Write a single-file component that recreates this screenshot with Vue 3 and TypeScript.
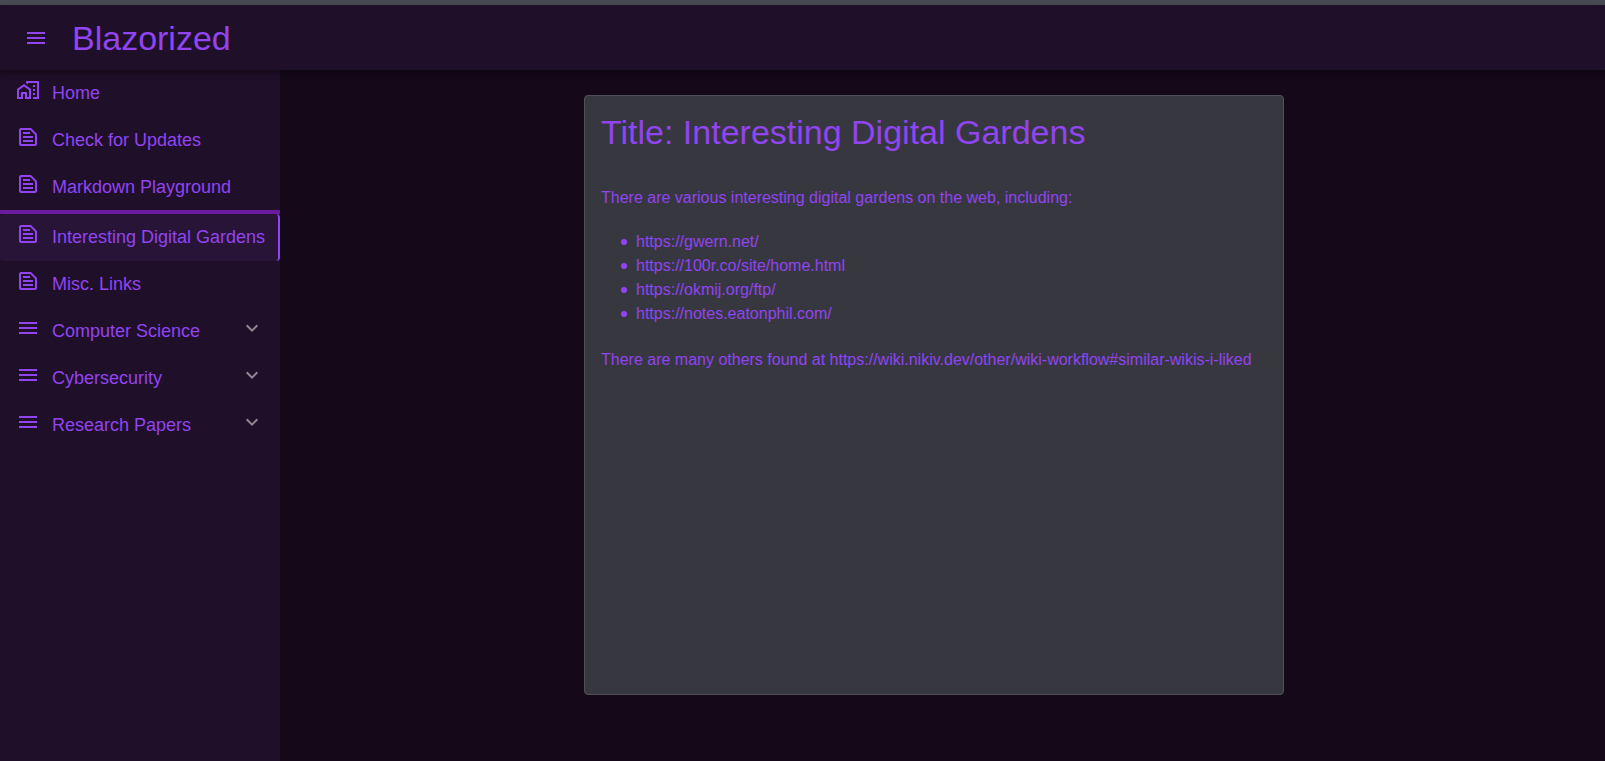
<script setup lang="ts">
import { ref } from 'vue'

type IconName = 'home' | 'article' | 'menu'

interface NavLink {
  label: string
  icon: IconName
  active?: boolean
}

const iconPaths: Record<IconName, string> = {
  home: 'M1 11v10h6v-5h2v5h6V11L8 6l-7 5zm12 8h-2v-5H5v5H3v-7l5-3.500 5 3.500v7zM17 7h2v2h-2zM17 11h2v2h-2zM17 15h2v2h-2zM10 3v1.970l2 1.430V5h9v14h-4v2h6V3z',
  article:
    'M15 3H5C3.900 3 3 3.900 3 5v14c0 1.100.9 2 2 2h14c1.100 0 2-.9 2-2V9l-6-6zM5 19V5h9.170L19 9.830V19H5zM7 15h10v2H7zM7 11h10v2H7zM7 7h7v2H7z',
  menu: 'M3 18h18v-2H3v2zm0-5h18v-2H3v2zm0-7v2h18V6H3z',
}

const pages: NavLink[] = [
  { label: 'Home', icon: 'home' },
  { label: 'Check for Updates', icon: 'article' },
  { label: 'Markdown Playground', icon: 'article' },
]
const notes: NavLink[] = [
  { label: 'Interesting Digital Gardens', icon: 'article', active: true },
  { label: 'Misc. Links', icon: 'article' },
]
const groups: string[] = ['Computer Science', 'Cybersecurity', 'Research Papers']

const gardens: string[] = [
  'https://gwern.net/',
  'https://100r.co/site/home.html',
  'https://okmij.org/ftp/',
  'https://notes.eatonphil.com/',
]

const drawerOpen = ref(true)
</script>

<template>
  <div class="layout">
    <header class="appbar">
      <button class="toggle" type="button" aria-label="Toggle menu" @click="drawerOpen = !drawerOpen">
        <svg class="icon" viewBox="0 0 24 24"><path :d="iconPaths.menu" /></svg>
      </button>
      <span class="brand">Blazorized</span>
    </header>

    <div class="body">
      <nav v-if="drawerOpen" class="drawer">
        <a v-for="link in pages" :key="link.label" class="row" href="#">
          <svg class="icon" viewBox="0 0 24 24"><path :d="iconPaths[link.icon]" /></svg>
          <span class="label">{{ link.label }}</span>
        </a>
        <hr class="divider" />
        <a v-for="link in notes" :key="link.label" class="row" :class="{ active: link.active }" href="#">
          <svg class="icon" viewBox="0 0 24 24"><path :d="iconPaths[link.icon]" /></svg>
          <span class="label">{{ link.label }}</span>
        </a>
        <button v-for="group in groups" :key="group" class="row" type="button" aria-expanded="false">
          <svg class="icon" viewBox="0 0 24 24"><path :d="iconPaths.menu" /></svg>
          <span class="label">{{ group }}</span>
          <svg class="icon chevron" viewBox="0 0 24 24">
            <path d="M16.590 8.590L12 13.170 7.410 8.590 6 10l6 6 6-6z" />
          </svg>
        </button>
      </nav>

      <main class="content">
        <article class="card">
          <h1 class="title">Title: Interesting Digital Gardens</h1>
          <p class="text">There are various interesting digital gardens on the web, including:</p>
          <ul class="list">
            <li v-for="url in gardens" :key="url" class="item"><a :href="url">{{ url }}</a></li>
          </ul>
          <p class="text">
            There are many others found at
            <a href="https://wiki.nikiv.dev/other/wiki-workflow#similar-wikis-i-liked">https://wiki.nikiv.dev/other/wiki-workflow#similar-wikis-i-liked</a>
          </p>
        </article>
      </main>
    </div>
  </div>
</template>

<style>
body {
  margin: 0;
  background: #150919;
}
</style>

<style scoped>
.layout {
  display: flex;
  flex-direction: column;
  min-height: 100vh;
  box-sizing: border-box;
  border-top: 5px solid #494c54;
  background: #150919;
  color: #9144f1;
  font-family: "Liberation Sans", Arial, sans-serif;
  font-size: 16px;
  line-height: 24px;
}

a {
  color: inherit;
  text-decoration: none;
}

button {
  border: 0;
  background: none;
  color: inherit;
  font: inherit;
  cursor: pointer;
}

.icon {
  flex: none;
  width: 24px;
  height: 24px;
  fill: currentColor;
}

.appbar {
  position: relative;
  z-index: 1;
  display: flex;
  align-items: center;
  height: 65px;
  padding: 0 24px;
  background: #200f28;
  box-shadow: 0 2px 4px -1px rgba(0, 0, 0, 0.2), 0 4px 5px 0 rgba(0, 0, 0, 0.14), 0 1px 10px 0 rgba(0, 0, 0, 0.12);
}

.toggle {
  display: flex;
  padding: 12px;
  margin: 0 12px 0 -12px;
}

.brand {
  font-size: 34px;
  line-height: 40px;
}

.body {
  display: flex;
  flex: 1;
}

.drawer {
  flex: none;
  width: 280px;
  background: #200f28;
}

.row {
  display: flex;
  align-items: flex-start;
  width: 100%;
  height: 47px;
  box-sizing: border-box;
  padding: 8px 16px;
  font-size: 18px;
  line-height: 30px;
  text-align: left;
}

.label {
  flex: 1;
  margin-left: 12px;
  white-space: nowrap;
}

.row.active {
  padding-right: 14px;
  border-right: 2px solid #9144f1;
  border-radius: 4px;
  background: #281436;
}

.divider {
  height: 4px;
  margin: -1px 0 0;
  border: 0;
  background: #6a1a9e;
}

.chevron {
  color: #8f8793;
}

.content {
  flex: 1;
  display: flex;
  align-items: flex-start;
  justify-content: center;
  padding: 25px 17px 25px 0;
}

.card {
  box-sizing: border-box;
  min-width: 700px;
  min-height: 600px;
  padding: 16px;
  border: 1px solid #515058;
  border-radius: 4px;
  background: #373740;
}

.title {
  margin: 0 0 34px;
  font-size: 34px;
  font-weight: 400;
  line-height: 40px;
}

.text {
  margin: 0;
}

.list {
  margin: 20px 0 22px;
  padding-left: 20px;
  list-style: none;
}

.item {
  display: flex;
  align-items: center;
  gap: 9px;
}

.item::before {
  content: "";
  width: 6px;
  height: 6px;
  border-radius: 50%;
  background: currentColor;
}
</style>
